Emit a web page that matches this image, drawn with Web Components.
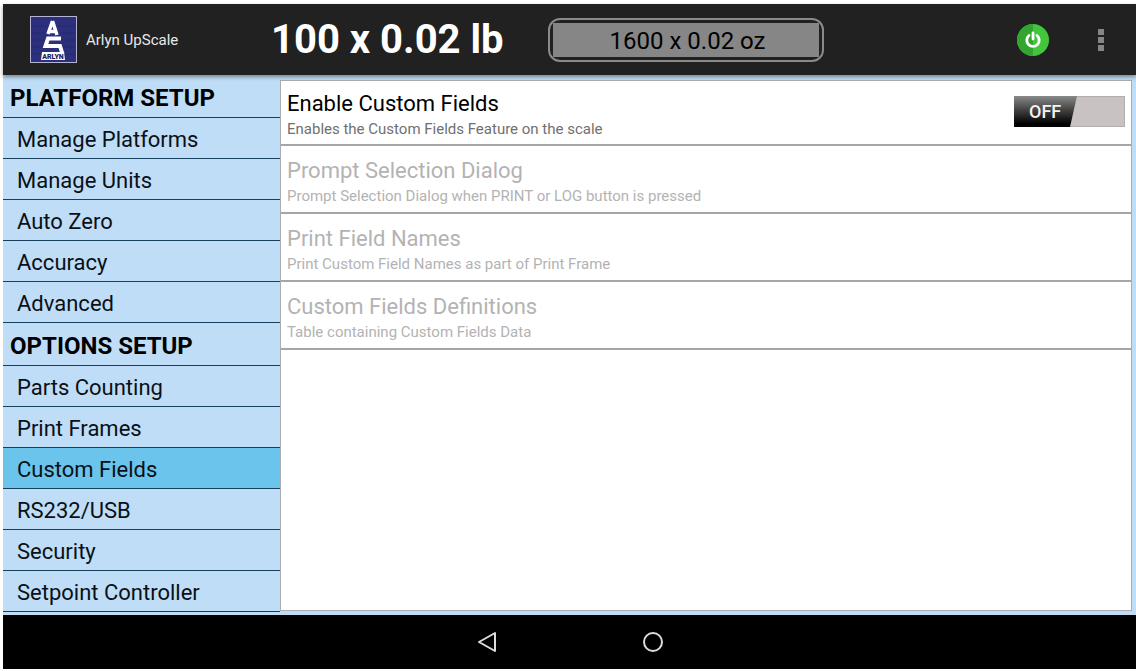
<!DOCTYPE html>
<html lang="en">
<head>
<meta charset="utf-8">
<title>Arlyn UpScale</title>
<style>
    html, body { margin: 0; background: #fff; }
    body { font-family: Roboto, "Open Sans", sans-serif; color: #000; }
</style>
</head>
<body>
<scale-app>
    <app-header slot="header" weight="100 x 0.02 lb" unit="1600 x 0.02 oz">Arlyn UpScale</app-header>
    <setup-menu slot="menu">
        <menu-heading>PLATFORM SETUP</menu-heading>
        <menu-entry>Manage Platforms</menu-entry>
        <menu-entry>Manage Units</menu-entry>
        <menu-entry>Auto Zero</menu-entry>
        <menu-entry>Accuracy</menu-entry>
        <menu-entry>Advanced</menu-entry>
        <menu-heading>OPTIONS SETUP</menu-heading>
        <menu-entry>Parts Counting</menu-entry>
        <menu-entry>Print Frames</menu-entry>
        <menu-entry active>Custom Fields</menu-entry>
        <menu-entry>RS232/USB</menu-entry>
        <menu-entry>Security</menu-entry>
        <menu-entry>Setpoint Controller</menu-entry>
    </setup-menu>
    <setting-row>
        <span slot="title">Enable Custom Fields</span>
        <span slot="summary">Enables the Custom Fields Feature on the scale</span>
        <toggle-switch slot="control" label="Enable Custom Fields"></toggle-switch>
    </setting-row>
    <setting-row disabled>
        <span slot="title">Prompt Selection Dialog</span>
        <span slot="summary">Prompt Selection Dialog when PRINT or LOG button is pressed</span>
    </setting-row>
    <setting-row disabled>
        <span slot="title">Print Field Names</span>
        <span slot="summary">Print Custom Field Names as part of Print Frame</span>
    </setting-row>
    <setting-row disabled>
        <span slot="title">Custom Fields Definitions</span>
        <span slot="summary">Table containing Custom Fields Data</span>
    </setting-row>
    <system-bar slot="footer"></system-bar>
</scale-app>

<script>
// Page frame: header, menu + panel, system bar
class ScaleApp extends HTMLElement {
    constructor() {
        super();
        this.attachShadow({ mode: 'open' });
    }

    connectedCallback() {
        this.shadowRoot.innerHTML = `
            <style>
                :host {
                    display: flex;
                    flex-direction: column;
                    box-sizing: border-box;
                    min-height: 100vh;
                    padding: 4px 0 2px 3px;
                }
                main {
                    flex: 1;
                    display: grid;
                    grid-template-columns: minmax(200px, 277px) 1fr;
                    background: #bfddf6;
                }
                .panel {
                    margin: 5px 4px 4px 0;
                    border: 1px solid #a9adb2;
                    background: #fff;
                }
            </style>
            <slot name="header"></slot>
            <main>
                <slot name="menu"></slot>
                <section class="panel"><slot></slot></section>
            </main>
            <slot name="footer"></slot>
        `;
    }
}

// Top bar with the logo, current weight range and actions
class AppHeader extends HTMLElement {
    constructor() {
        super();
        this.attachShadow({ mode: 'open' });
    }

    connectedCallback() {
        this.shadowRoot.innerHTML = `
            <style>
                :host {
                    display: flex;
                    align-items: center;
                    box-sizing: border-box;
                    height: 71px;
                    padding: 0 23px 0 27px;
                    background: #212121;
                    color: #fff;
                    position: relative;
                    z-index: 1;
                    box-shadow: 0 2px 4px rgba(0, 0, 0, 0.4);
                }
                .brand {
                    display: flex;
                    align-items: center;
                    gap: 9px;
                    width: 241px;
                    font-size: 15px;
                    color: #e8e8e8;
                }
                .weight { font-size: 40px; font-weight: 700; white-space: nowrap; }
                button {
                    margin: 0;
                    padding: 0;
                    border: 0;
                    background: none;
                    font: inherit;
                    cursor: pointer;
                }
                .unit {
                    margin-left: 44px;
                    width: 276px;
                    padding: 3px;
                    border: 2px solid #8a8a8a;
                    border-radius: 12px;
                    font-size: 24px;
                    color: #000;
                }
                .unit span {
                    display: block;
                    padding: 2px 0 0 4px;
                    background: #868686;
                    line-height: 32px;
                }
                .actions { display: flex; align-items: center; gap: 40px; margin-left: auto; }
                .actions button { display: flex; justify-content: center; }
                svg { display: block; }
            </style>
            <div class="brand">
                <svg width="47" height="47" viewBox="0 0 47 47" aria-hidden="true">
                    <rect x=".5" y=".5" width="46" height="46" fill="#2b2f7c" stroke="#b4b4d0"/>
                    <path d="M2 10h43M2 17h43M2 24h43M2 31h43M2 38h43" stroke="#262a72"/>
                    <path d="M22.500 5L18 18M22.500 5L27 19M19 15.500h7" fill="none" stroke="#fff" stroke-width="3.500"/>
                    <path d="M31 22.500H18L15.500 30H30L32.500 38" fill="none" stroke="#fff" stroke-width="4"/>
                    <path d="M12 36h22l1 8H11z" fill="#fff"/>
                    <text x="23" y="43" text-anchor="middle" font-family="Roboto, sans-serif" font-size="7" font-weight="900" fill="#20205c">ARLYN</text>
                </svg>
                <slot></slot>
            </div>
            <div class="weight">${this.getAttribute('weight')}</div>
            <button class="unit" type="button"><span>${this.getAttribute('unit')}</span></button>
            <div class="actions">
                <button type="button" aria-label="Power">
                    <svg width="32" height="32" viewBox="0 0 32 32">
                        <circle cx="16" cy="16" r="16" fill="#41c63c"/>
                        <path d="M16 0a16 16 0 0 0 0 32z" fill="#32a52f"/>
                        <path d="M12 11.500a6.200 6.200 0 1 0 8 0M16 9v6" fill="none" stroke="#fff" stroke-width="2.800" stroke-linecap="round"/>
                    </svg>
                </button>
                <button type="button" aria-label="More options">
                    <svg width="24" height="24" viewBox="0 0 24 24" fill="#858585">
                        <path d="M9 1h6v6H9zM9 9h6v6H9zM9 17h6v6H9z"/>
                    </svg>
                </button>
            </div>
        `;
    }
}

// Left column
class SetupMenu extends HTMLElement {
    constructor() {
        super();
        this.attachShadow({ mode: 'open' });
        this.shadowRoot.innerHTML = `
            <style>
                :host { display: block; }
                nav { display: flex; flex-direction: column; }
            </style>
            <nav aria-label="Setup"><slot></slot></nav>
        `;
    }
}

class MenuHeading extends HTMLElement {
    constructor() {
        super();
        this.attachShadow({ mode: 'open' });
        this.shadowRoot.innerHTML = `
            <style>
                :host { display: block; border-bottom: 1px solid #17405e; }
                h2 { margin: 0; padding: 4px 7px 0; font-size: 24px; font-weight: 700; line-height: 38px; }
            </style>
            <h2><slot></slot></h2>
        `;
    }
}

class MenuEntry extends HTMLElement {
    constructor() {
        super();
        this.attachShadow({ mode: 'open' });
        this.shadowRoot.innerHTML = `
            <style>
                :host { display: block; border-bottom: 1px solid #17405e; }
                :host([active]) { background: #6bc4ec; }
                a {
                    display: block;
                    padding: 4px 14px 0;
                    font-size: 22px;
                    line-height: 36px;
                    color: #0a1016;
                    text-decoration: none;
                }
            </style>
            <a href="#"><slot></slot></a>
        `;
    }
}

// One preference line with title, summary and an optional control
class SettingRow extends HTMLElement {
    constructor() {
        super();
        this.attachShadow({ mode: 'open' });
        this.shadowRoot.innerHTML = `
            <style>
                :host {
                    display: flex;
                    align-items: center;
                    justify-content: space-between;
                    padding: 10px 6px 6px;
                    border-bottom: 2px solid #a6a6a6;
                }
                :host(:first-of-type) { padding-top: 8px; padding-bottom: 5px; }
                .title { font-size: 22px; line-height: 30px; }
                .summary { font-size: 15px; line-height: 20px; color: #707070; }
                :host([disabled]) .title, :host([disabled]) .summary { color: #b3b3b3; }
                ::slotted(toggle-switch) { align-self: flex-start; margin-top: 7px; }
            </style>
            <div>
                <div class="title"><slot name="title"></slot></div>
                <div class="summary"><slot name="summary"></slot></div>
            </div>
            <slot name="control"></slot>
        `;
    }
}

class ToggleSwitch extends HTMLElement {
    constructor() {
        super();
        this.attachShadow({ mode: 'open' });
    }

    connectedCallback() {
        this.shadowRoot.innerHTML = `
            <style>
                :host { display: block; }
                label {
                    display: grid;
                    width: 111px;
                    height: 31px;
                    background: #c9c2c3;
                    box-shadow: inset 0 0 0 1px #b3adae;
                    cursor: pointer;
                }
                input, .thumb { grid-area: 1 / 1; }
                input { appearance: none; margin: 0; }
                .thumb {
                    width: 63px;
                    background: linear-gradient(#8a8a8a, #4a4a4a 40%, #000 90%);
                    clip-path: polygon(0 0, 100% 0, 56px 100%, 0 100%);
                    color: #f2f2f2;
                    font-family: "Liberation Sans Narrow", Roboto, sans-serif;
                    font-size: 18px;
                    font-weight: 500;
                    line-height: 31px;
                    text-indent: 15px;
                }
                label:has(:checked) .thumb { justify-self: end; }
            </style>
            <label>
                <input type="checkbox" aria-label="${this.getAttribute('label')}">
                <span class="thumb">OFF</span>
            </label>
        `;
        const thumb = this.shadowRoot.querySelector('.thumb');
        this.shadowRoot.querySelector('input').addEventListener('change', (e) => {
            thumb.textContent = e.target.checked ? 'ON' : 'OFF';
        });
    }
}

// Android navigation buttons
class SystemBar extends HTMLElement {
    constructor() {
        super();
        this.attachShadow({ mode: 'open' });
        this.shadowRoot.innerHTML = `
            <style>
                :host {
                    display: flex;
                    justify-content: center;
                    align-items: center;
                    gap: 142px;
                    height: 54px;
                    background: #000;
                }
                button { display: block; margin: 0; padding: 0; border: 0; background: none; cursor: pointer; }
                svg { display: block; fill: none; stroke: #dcdcdc; stroke-width: 2; }
            </style>
            <button type="button" aria-label="Back">
                <svg width="24" height="24" viewBox="0 0 24 24"><path d="M20 3v18L4 12z" stroke-linejoin="round"/></svg>
            </button>
            <button type="button" aria-label="Home">
                <svg width="24" height="24" viewBox="0 0 24 24"><circle cx="12" cy="12" r="9"/></svg>
            </button>
        `;
    }
}

customElements.define('scale-app', ScaleApp);
customElements.define('app-header', AppHeader);
customElements.define('setup-menu', SetupMenu);
customElements.define('menu-heading', MenuHeading);
customElements.define('menu-entry', MenuEntry);
customElements.define('setting-row', SettingRow);
customElements.define('toggle-switch', ToggleSwitch);
customElements.define('system-bar', SystemBar);
</script>
</body>
</html>
